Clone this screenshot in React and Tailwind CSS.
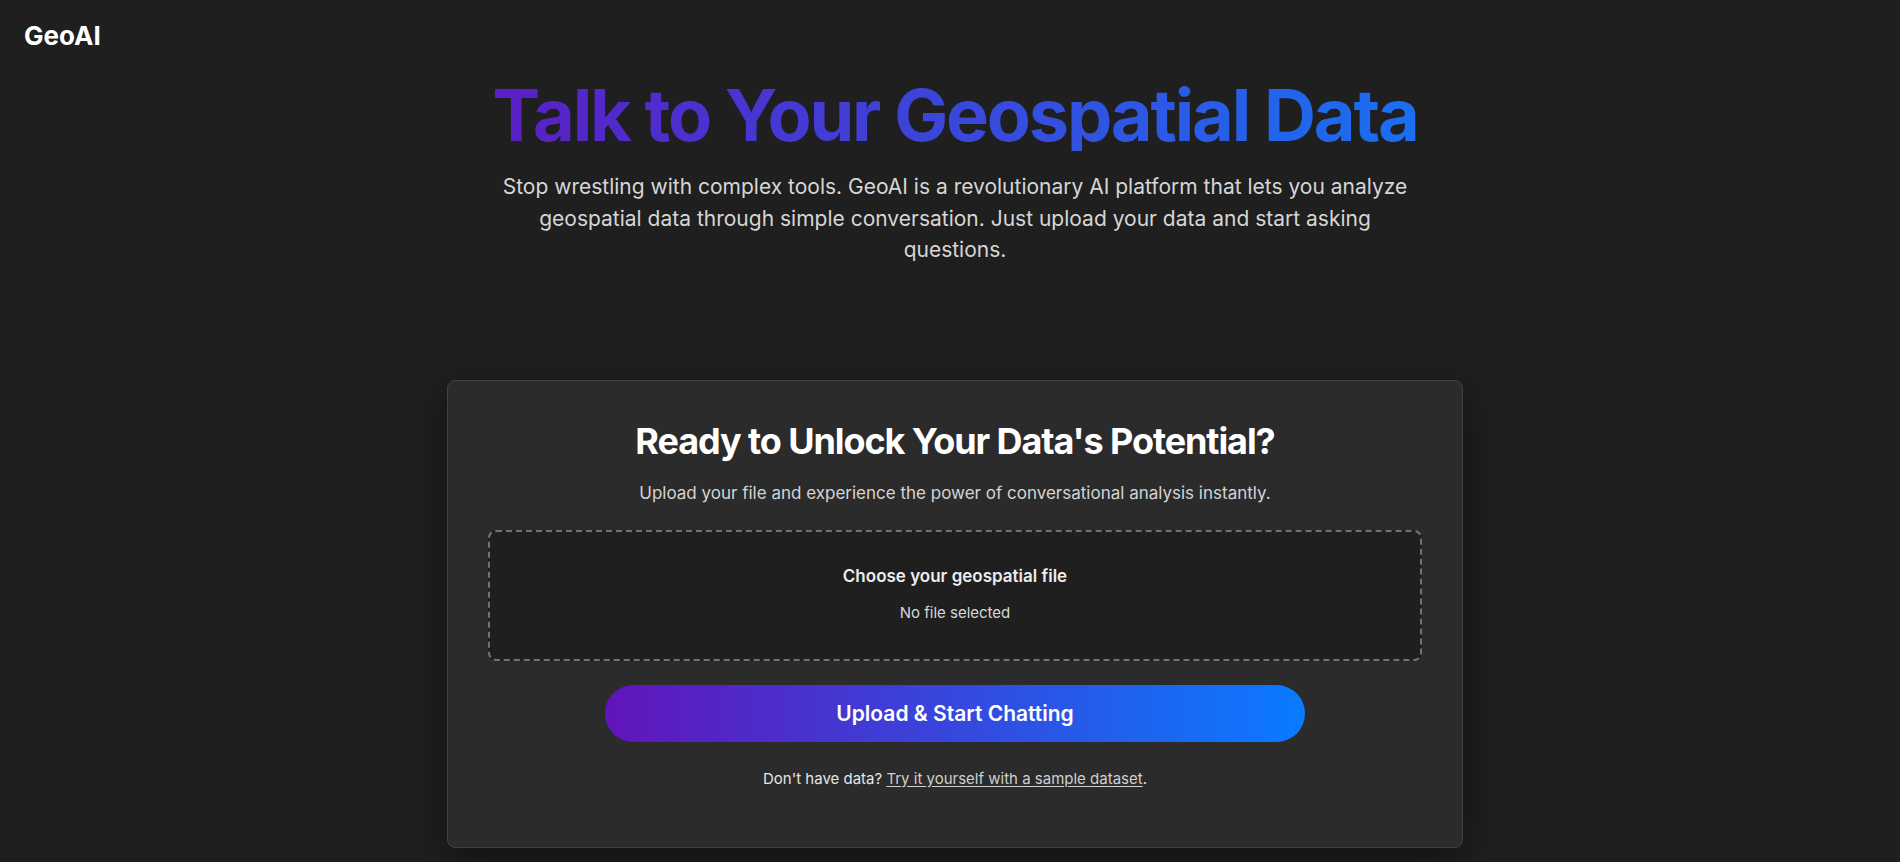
const font = { fontFamily: "Inter, 'Noto Sans', sans-serif" };

export default function App() {
  return (
    <div className="min-h-screen bg-[#1f1f1f] text-white" style={font}>
      <header className="px-6 py-5">
        <span className="text-[26px] font-bold leading-8">GeoAI</span>
      </header>

      <main className="pl-[34px] pr-6 pb-16">
        <section className="mt-[7px] flex flex-col items-center text-center">
          <h1 className="bg-linear-to-r/srgb from-[#5a1fc4] to-[#1a6ff2] bg-clip-text text-7xl font-bold leading-none tracking-[-0.03em] text-transparent">
            Talk to Your Geospatial Data
          </h1>
          <p className="mt-5 max-w-[920px] text-[21px] leading-[1.5] text-[#d6d6d6]">
            Stop wrestling with complex tools. GeoAI is a revolutionary AI platform that lets you analyze geospatial data through simple conversation. Just upload your data and start asking questions.
          </p>
        </section>

        <section className="mx-auto mt-[114px] w-full max-w-[1016px] rounded-lg border border-[#404040] bg-[#2b2b2b] px-10 pt-10 pb-[57px] text-center shadow-[0_12px_40px_rgba(0,0,0,0.45)]">
          <h2 className="text-4xl font-bold tracking-[-0.03em]">Ready to Unlock Your Data's Potential?</h2>
          <p className="mt-5 text-[17px] text-[#d4d4d4]">
            Upload your file and experience the power of conversational analysis instantly.
          </p>

          <div className="mt-6 rounded-lg border-2 border-dashed border-[#6e737b] bg-[#1f1f1f] pt-8 pb-[35px]">
            <p className="text-[17px] font-semibold text-[#ececec]">Choose your geospatial file</p>
            <p className="mt-3 text-[15px] text-[#d8d8d8]">No file selected</p>
          </div>

          <button className="mx-auto mt-6 flex h-[57px] w-3/4 items-center justify-center rounded-full bg-linear-to-r/srgb from-[#6214bb] to-[#0a7bff] text-[21px] font-semibold text-white">
            Upload &amp; Start Chatting
          </button>

          <p className="mt-[26px] text-[15px] leading-[22px] text-[#e5e5e5]">
            Don't have data?{" "}
            <a href="#" className="text-[#d0d0d0] underline underline-offset-2">
              Try it yourself with a sample dataset
            </a>
            .
          </p>
        </section>
      </main>
    </div>
  );
}
